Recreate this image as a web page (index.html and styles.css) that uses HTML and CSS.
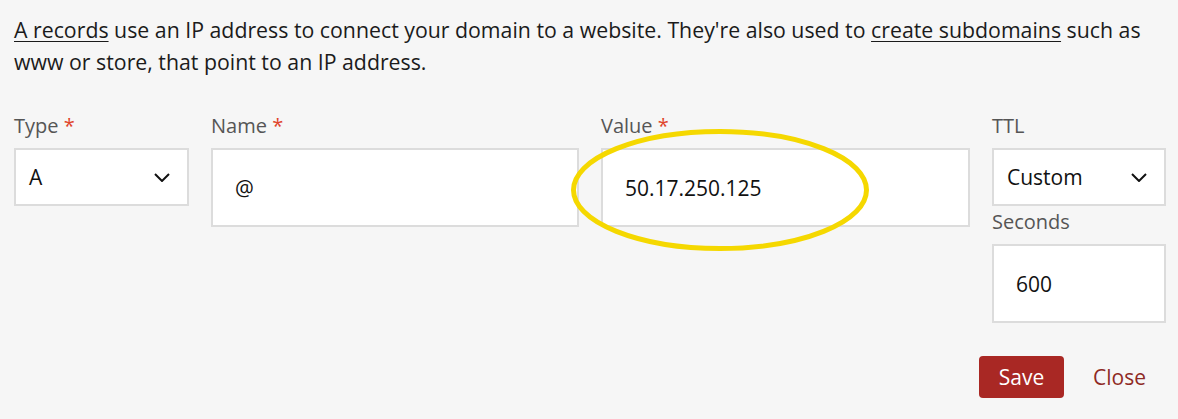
FILE: index.html
```html
<!DOCTYPE html>
<html lang="en">
<head>
<meta charset="utf-8">
<title>A record</title>
<link rel="stylesheet" href="styles.css">
</head>
<body>
<div class="panel">
  <p class="intro"><a href="#" class="link">A records</a> use an IP address to connect your domain to a website. They're also used to <a href="#" class="link">create subdomains</a> such as www or store, that point to an IP address.</p>

  <div class="fields">
    <div class="field">
      <label class="label">Type <span class="req">*</span></label>
      <div class="select">
        <span>A</span>
        <svg class="chev" width="16" height="9" viewBox="0 0 16 9"><path d="M1 1 L8 8 L15 1" fill="none" stroke="#111" stroke-width="2"/></svg>
      </div>
    </div>
    <div class="field">
      <label class="label">Name <span class="req">*</span></label>
      <div class="input">@</div>
    </div>
    <div class="field">
      <label class="label">Value <span class="req">*</span></label>
      <div class="input-wrap">
        <div class="input">50.17.250.125</div>
        <svg class="circle" width="298" height="122" viewBox="0 0 298 122"><ellipse cx="149" cy="61" rx="146.5" ry="58.5" fill="none" stroke="#f5d800" stroke-width="5"/></svg>
      </div>
    </div>
    <div class="field">
      <label class="label">TTL</label>
      <div class="select">
        <span>Custom</span>
        <svg class="chev" width="16" height="9" viewBox="0 0 16 9"><path d="M1 1 L8 8 L15 1" fill="none" stroke="#111" stroke-width="2"/></svg>
      </div>
      <label class="label sub">Seconds</label>
      <div class="input">600</div>
    </div>
  </div>

  <div class="actions">
    <button class="btn-save">Save</button>
    <button class="btn-close">Close</button>
  </div>
</div>
</body>
</html>
```
FILE: styles.css
```css
* { box-sizing: border-box; }
html, body {
  margin: 0;
  padding: 0;
  background: #f6f6f6;
}
body {
  font-family: "Open Sans", "Liberation Sans", sans-serif;
  color: #1b1b1b;
  font-size: 20px;
}
.panel {
  padding: 14px 13px 14px 14px;
}
.intro {
  margin: 0;
  font-size: 21.3px;
  line-height: 32px;
}
.link {
  color: #1b1b1b;
  text-decoration: underline;
  text-underline-offset: 3px;
  text-decoration-thickness: 1px;
}
.fields {
  margin-top: 34px;
  display: grid;
  grid-template-columns: 175px 368px 369px 174px;
  column-gap: 22px;
  align-items: start;
}
.field {
  display: flex;
  flex-direction: column;
}
.label {
  color: #555;
  line-height: 28px;
  margin-bottom: 8px;
}
.label.sub {
  margin-top: 2px;
}
.req {
  color: #e0442b;
}
.select {
  height: 58px;
  background: #fff;
  border: 2px solid #dcdcdc;
  display: flex;
  align-items: center;
  justify-content: space-between;
  padding: 0 17px 0 13px;
  color: #111;
  font-size: 21px;
}
.input {
  height: 79px;
  background: #fff;
  border: 2px solid #dcdcdc;
  display: flex;
  align-items: center;
  padding: 0 22px;
  color: #111;
  font-size: 21px;
}
.input-wrap {
  position: relative;
}
.circle {
  position: absolute;
  left: -30px;
  top: -19px;
  pointer-events: none;
}
.actions {
  margin-top: 33px;
  display: flex;
  justify-content: flex-end;
  align-items: center;
  gap: 10px;
}
.btn-save {
  font-family: inherit;
  font-size: 21px;
  height: 42px;
  width: 85px;
  background: #a92824;
  color: #fff;
  border: none;
  border-radius: 4px;
  padding: 0;
}
.btn-close {
  font-family: inherit;
  font-size: 21px;
  background: none;
  border: none;
  color: #8f2a25;
  padding: 0 19px;
  height: 42px;
}
```
